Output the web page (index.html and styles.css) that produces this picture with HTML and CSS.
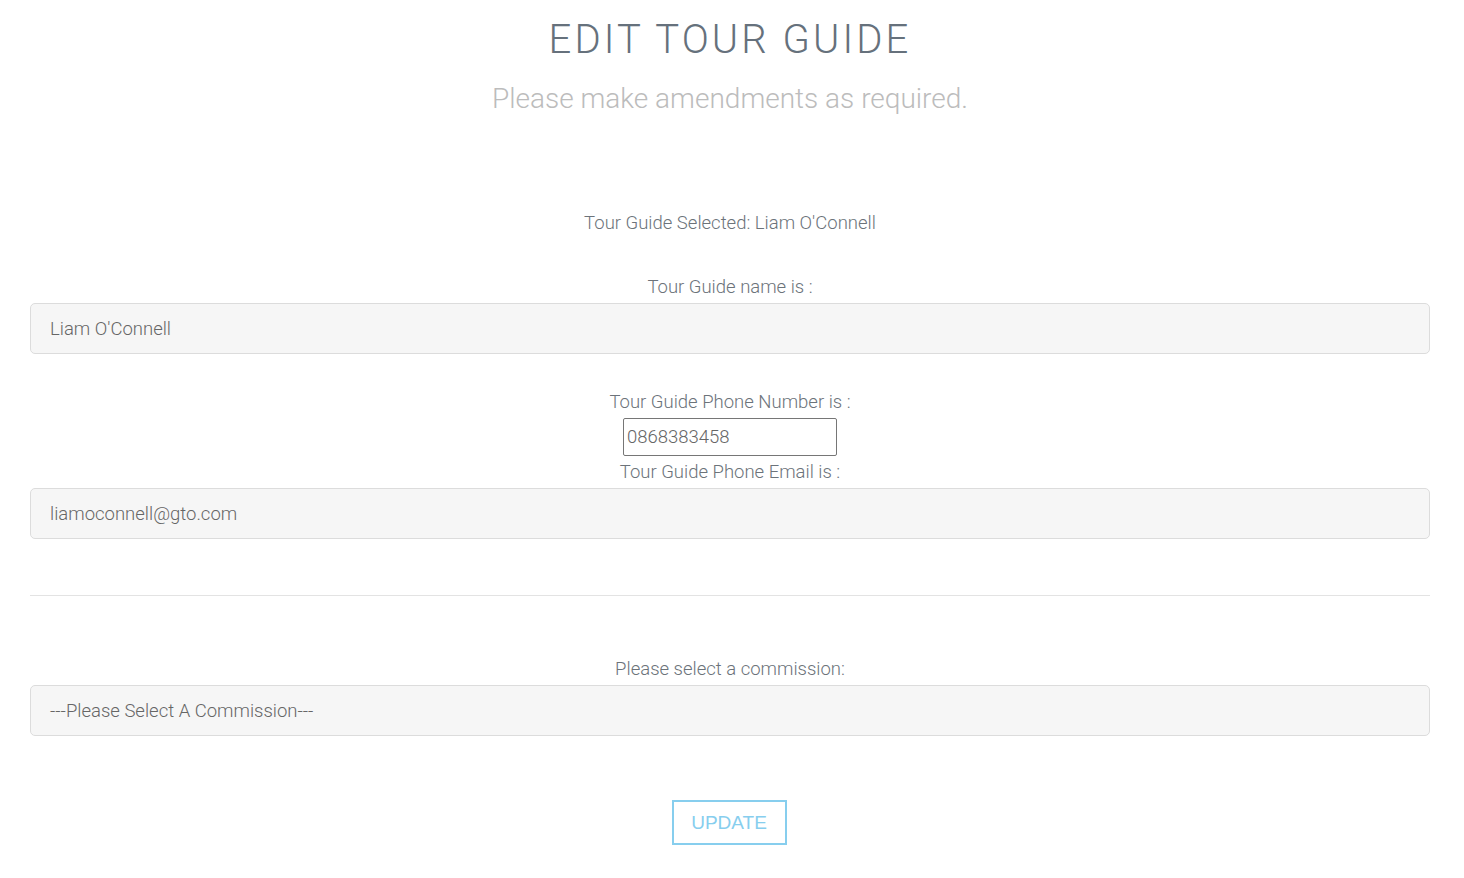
FILE: index.html
```html
<!DOCTYPE html>
<html>
<head>
<meta charset="utf-8">
<link rel="stylesheet" href="styles.css">
</head>
<body>
<div class="page">
  <header class="head">
    <h1 class="title">EDIT TOUR GUIDE</h1>
    <p class="subtitle">Please make amendments as required.</p>
  </header>
  <form class="form">
    <p class="selected">Tour Guide Selected: Liam O'Connell</p>
    <label class="label label-name">Tour Guide name is :</label>
    <input class="field" type="text" value="Liam O'Connell">
    <label class="label label-phone">Tour Guide Phone Number is :</label>
    <input class="phone" type="text" value="0868383458">
    <label class="label label-email">Tour Guide Phone Email is :</label>
    <input class="field" type="text" value="liamoconnell@gto.com">
    <hr class="rule">
    <label class="label label-comm">Please select a commission:</label>
    <div class="field select">---Please Select A Commission---</div>
    <div class="actions"><button type="button" class="btn">UPDATE</button></div>
  </form>
</div>
</body>
</html>
```
FILE: styles.css
```css
* { box-sizing: border-box; }
body {
  margin: 0;
  background: #fff;
  font-family: Roboto, "Noto Sans", sans-serif;
  font-weight: 300;
  color: #6c737a;
}
.page { padding: 0 34px 0 30px; }
.head { text-align: center; }
.title {
  margin: 0;
  padding-top: 18px;
  font-size: 40px;
  font-weight: 300;
  letter-spacing: 3.1px;
  line-height: 44px;
  color: #66717c;
}
.subtitle {
  margin: 19px 0 0;
  font-size: 28px;
  line-height: 36px;
  color: #bcbcbc;
}
.form { display: flex; flex-direction: column; align-items: center; }
.selected {
  margin: 94px 0 0;
  font-size: 18.5px;
  line-height: 24px;
}
.label {
  display: block;
  font-size: 18.5px;
  line-height: 24px;
  text-align: center;
}
.label-name { margin-top: 40px; margin-bottom: 4px; }
.label-phone { margin-top: 36px; margin-bottom: 4px; }
.label-email { margin-top: 4px; margin-bottom: 4px; }
.label-comm { margin-top: 61px; margin-bottom: 4px; }
.field {
  align-self: stretch;
  height: 51px;
  padding: 0 19px;
  background: #f6f6f6;
  border: 1px solid #dcdcdc;
  border-radius: 5px;
  font-family: Roboto, "Noto Sans", sans-serif;
  font-weight: 300;
  font-size: 18.5px;
  color: #666;
  outline: none;
}
.select { display: flex; align-items: center; }
.phone {
  width: 214px;
  height: 38px;
  padding: 0 3px;
  border: 1px solid #767676;
  border-radius: 2px;
  font-family: Roboto, "Noto Sans", sans-serif;
  font-weight: 300;
  font-size: 18.5px;
  color: #666;
  background: #fff;
}
.rule {
  align-self: stretch;
  margin: 56px 0 0;
  border: 0;
  border-top: 1px solid #e3e3e3;
}
.actions { margin-top: 64px; padding-right: 2px; }
.btn {
  width: 115px;
  height: 45px;
  background: #fff;
  border: 2px solid #87ceee;
  color: #87ceee;
  font-family: "Liberation Sans", Arial, sans-serif;
  font-size: 19px;
  font-weight: 400;
  padding: 0;
}
```
